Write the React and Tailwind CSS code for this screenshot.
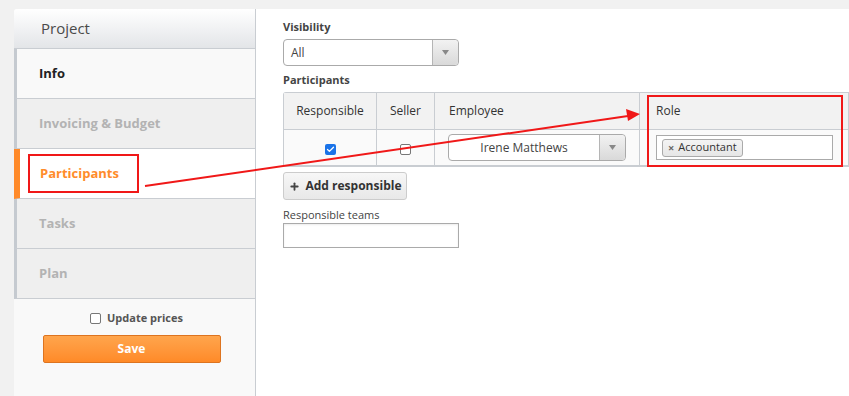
import { Plus, Check } from "lucide-react";

const font = { fontFamily: '"Open Sans", "Noto Sans", sans-serif' };

function NavItem({ label, state }) {
  if (state === "active") {
    return (
      <div className="h-[50px] flex items-center bg-white border-l-[6px] border-[#ff8a2a] border-b border-b-[#c9cdd2] pl-[20px] text-[13px] font-bold text-[#ff8c2b]">
        {label}
      </div>
    );
  }
  const first = state === "first";
  return (
    <div
      className={`h-[50px] flex items-center border-l-[3px] border-[#c5cad0] border-b border-b-[#c9cdd2] pl-[22px] text-[13px] font-bold ${
        first ? "bg-[#f9f9f9] text-[#222]" : "bg-[#efefef] text-[#b3b3b3]"
      }`}
    >
      {label}
    </div>
  );
}

function Caret() {
  return (
    <div className="w-[26px] h-full flex items-center justify-center border-l border-[#b5b5b5] bg-gradient-to-b from-[#f2f2f2] to-[#d9d9d9] rounded-r-[4px]">
      <svg width="7" height="5" viewBox="0 0 7 5">
        <path d="M0 0h7L3.5 5z" fill="#888" />
      </svg>
    </div>
  );
}

export default function App() {
  return (
    <div style={font} className="relative w-[849px] h-[396px] bg-[#f1f1f1] flex flex-col overflow-hidden">
      <div className="h-[9px] shrink-0" />
      <div className="flex flex-1 min-h-0">
        <div className="w-[14px] shrink-0" />
        <aside className="w-[242px] shrink-0 flex flex-col bg-[#f9f9f9] border-r border-[#c9cdd2] rounded-tl-[3px]">
          <div className="h-[40px] flex items-center pl-[27px] text-[15px] text-[#4a4a4a] bg-gradient-to-b from-white to-[#e3e5e8] border-b border-[#c9cdd2] rounded-tl-[3px]">
            Project
          </div>
          <NavItem label="Info" state="first" />
          <NavItem label="Invoicing & Budget" />
          <NavItem label="Participants" state="active" />
          <NavItem label="Tasks" />
          <NavItem label="Plan" />
          <div className="flex flex-col items-center pt-[12px]">
            <label className="flex items-center gap-[6px] text-[11px] font-bold text-[#555] h-[15px] ml-[4px]">
              <span className="w-[11px] h-[11px] border border-[#777] rounded-[2px] bg-white" />
              Update prices
            </label>
            <button className="mt-[9px] w-[178px] h-[28px] rounded-[2px] border border-[#dd7420] bg-gradient-to-b from-[#ffa54c] to-[#ff8a27] text-white text-[12px] font-bold -ml-[6px]">
              Save
            </button>
          </div>
        </aside>

        <main className="flex-1 bg-white pl-[27px] pt-[9px] text-[#333]">
          <div className="text-[11px] font-bold text-[#444] h-[17px] leading-[17px]">Visibility</div>
          <div className="mt-[4px] w-[176px] h-[27px] border border-[#aaa] rounded-[4px] flex items-center bg-white">
            <span className="flex-1 pl-[7px] text-[12px] text-[#444]">All</span>
            <Caret />
          </div>
          <div className="mt-[5px] text-[11px] font-bold text-[#444] h-[17px] leading-[17px]">Participants</div>
          <div className="mt-[4px] w-[566px] border border-[#c9cdd2] border-b-2 rounded-tl-[3px]">
            <div className="grid grid-cols-[93px_58px_205px_1fr] h-[37px] bg-[#f2f2f2] border-b border-[#c9cdd2] text-[12px] text-[#333]">
              <div className="flex items-center justify-center border-r border-[#c9cdd2]">Responsible</div>
              <div className="flex items-center justify-center border-r border-[#c9cdd2]">Seller</div>
              <div className="flex items-center pl-[14px] border-r border-[#c9cdd2]">Employee</div>
              <div className="flex items-center pl-[16px]">Role</div>
            </div>
            <div className="grid grid-cols-[93px_58px_205px_1fr] h-[35px] bg-[#fafafa]">
              <div className="flex items-center justify-center pt-[3px] border-r border-[#c9cdd2]">
                <span className="w-[11px] h-[11px] rounded-[2px] bg-[#1a73e8] flex items-center justify-center">
                  <Check size={9} strokeWidth={3.5} color="white" />
                </span>
              </div>
              <div className="flex items-center justify-center pt-[3px] border-r border-[#c9cdd2]">
                <span className="w-[11px] h-[11px] rounded-[2px] border border-[#777] bg-white" />
              </div>
              <div className="flex items-center pl-[13px] border-r border-[#c9cdd2]">
                <div className="w-[178px] h-[27px] border border-[#aaa] rounded-[4px] flex items-center bg-white">
                  <span className="flex-1 text-center text-[12px] text-[#444]">Irene Matthews</span>
                  <Caret />
                </div>
              </div>
              <div className="flex items-center pl-[16px]">
                <div className="w-[177px] h-[25px] border border-[#aaa] bg-white flex items-center pl-[5px]">
                  <span className="h-[18px] px-[5px] flex items-center gap-[4px] rounded-[3px] border border-[#aaa] bg-gradient-to-b from-[#f4f4f4] to-[#e6e6e6] text-[11px] text-[#333]">
                    <span className="text-[11px] font-bold text-[#666] leading-none">×</span>
                    Accountant
                  </span>
                </div>
              </div>
            </div>
          </div>
          <button className="mt-[5px] w-[124px] h-[28px] rounded-[3px] border border-[#ccc] bg-gradient-to-b from-[#f7f7f7] to-[#e8e8e8] flex items-center justify-center gap-[6px] text-[12px] font-bold text-[#333]">
            <Plus size={11} strokeWidth={4} color="#444" />
            Add responsible
          </button>
          <div className="mt-[7px] text-[11px] text-[#444] h-[15px] leading-[15px]">Responsible teams</div>
          <div className="mt-[1px] w-[176px] h-[25px] border border-[#aaa] bg-white shadow-[inset_0_1px_2px_rgba(0,0,0,0.08)]" />
        </main>
      </div>

      <div className="absolute left-[28px] top-[154px] w-[111px] h-[39px] border-2 border-[#f01818]" />
      <div className="absolute left-[647px] top-[95px] w-[196px] h-[72px] border-2 border-[#f01818]" />
      <svg className="absolute inset-0 pointer-events-none" width="849" height="396">
        <line x1="145" y1="186" x2="628" y2="116" stroke="#f01818" strokeWidth="2" />
        <path d="M640 114 L626 109 L628 121 Z" fill="#f01818" />
      </svg>
    </div>
  );
}
